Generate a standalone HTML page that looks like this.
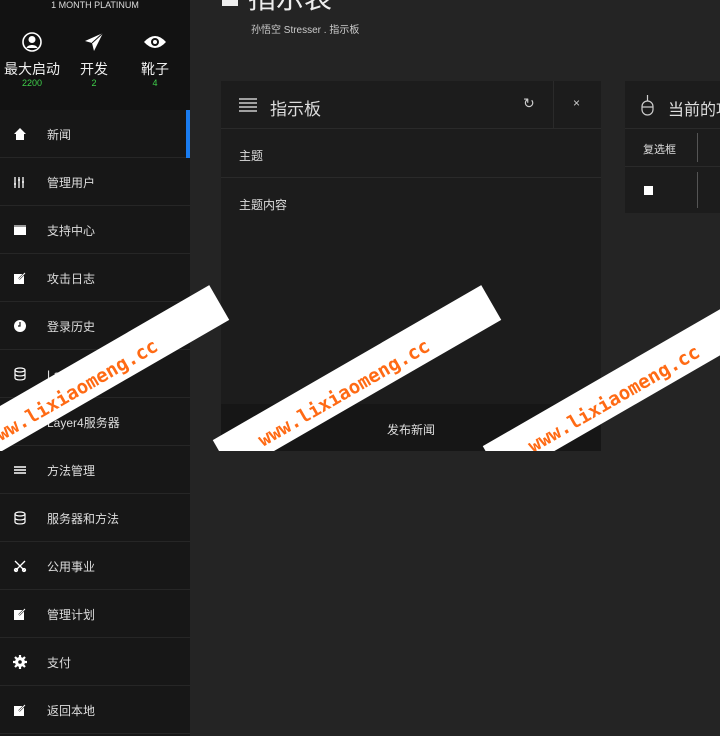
<!DOCTYPE html>
<html><head><meta charset="utf-8"><style>
*{margin:0;padding:0;box-sizing:border-box}
body{width:720px;height:736px;overflow:hidden;background:#242424;font-family:"Liberation Sans","Noto Sans CJK SC",sans-serif;color:#ddd;position:relative}
.side{position:absolute;left:0;top:0;width:190px;height:736px;background:#171717}
.top{height:110px;background:#121212;position:relative}
.plan{position:absolute;top:0;left:0;width:190px;text-align:center;font-size:9px;color:#ddd;line-height:11px}
.stat{position:absolute;top:32px;width:70px;text-align:center}
.stat .l{font-size:14px;color:#eee;margin-top:4px;line-height:17px}
.stat .n{font-size:9px;color:#3ecf4a;line-height:11px}
.item{height:48px;border-bottom:1px solid #262626;position:relative;font-size:12px;color:#ddd}
.item span{position:absolute;left:47px;top:16px}
.item .ic{position:absolute;left:13px;top:17px;width:14px;height:14px}
.act::after{content:"";position:absolute;right:0;top:0;width:4px;height:48px;background:#1a7cf0}
.panel{position:absolute;left:221px;top:81px;width:380px;height:370px;background:#1c1c1c}
.ph{height:48px;border-bottom:1px solid #2a2a2a;position:relative}
.row{height:49px;border-bottom:1px solid #2a2a2a;font-size:12px;padding:18px 0 0 18px}
.foot{position:absolute;left:0;bottom:0;width:380px;height:47px;background:#161616;text-align:center;font-size:12px;padding-top:17px}
.clip{position:absolute;left:0;top:0;width:720px;height:451px;overflow:hidden}
.band{position:absolute;width:310px;height:40px;background:#fff;transform:rotate(-30deg);transform-origin:center}
.band span{position:absolute;left:40px;top:14px;font:bold 19px "DejaVu Sans Mono","Liberation Mono",monospace;color:#ff6a14;letter-spacing:0;white-space:nowrap}
</style></head><body>
<div class="side">
<div class="top">
<div class="plan">1 MONTH PLATINUM</div>
<div class="stat" style="left:-3px"><svg width="20" height="20" viewBox="0 0 20 20"><circle cx="10" cy="10" r="9" fill="none" stroke="#fff" stroke-width="1.6"/><circle cx="10" cy="7.5" r="3.5" fill="#fff"/><path d="M4.5 16c1-4 10-4 11 0z" fill="#fff"/></svg><div class="l">最大启动</div><div class="n">2200</div></div>
<div class="stat" style="left:59px"><svg width="20" height="20" viewBox="0 0 20 20"><path d="M19 1L1 9l7 2 2 8z" fill="#fff"/><path d="M8 11L19 1" stroke="#121212" stroke-width="1"/></svg><div class="l">开发</div><div class="n">2</div></div>
<div class="stat" style="left:120px"><svg width="24" height="20" viewBox="0 0 24 20"><path d="M1 10Q12-2 23 10Q12 22 1 10z" fill="#fff"/><circle cx="12" cy="10" r="4" fill="#121212"/><circle cx="12" cy="10" r="2" fill="#fff"/></svg><div class="l">靴子</div><div class="n">4</div></div>
</div>
<div class="item act"><svg class="ic" viewBox="0 0 14 14"><path d="M7 1L1 7h2v6h8V7h2z" fill="#fff"/></svg><span>新闻</span></div>
<div class="item"><svg class="ic" viewBox="0 0 14 14" stroke="#fff" stroke-width="1.3"><path d="M2 2v11M6 2v11M10 2v11"/><path d="M1 9h2M5 5h2M9 7h2"/></svg><span>管理用户</span></div>
<div class="item"><svg class="ic" viewBox="0 0 14 14"><rect x="1" y="2" width="12" height="10" fill="#fff"/><rect x="1" y="2" width="12" height="2" fill="#999"/></svg><span>支持中心</span></div>
<div class="item"><svg class="ic" viewBox="0 0 14 14"><rect x="1" y="3" width="10" height="10" fill="#fff"/><path d="M6 8l6-6" stroke="#171717" stroke-width="2"/><path d="M6 8l6-6" stroke="#fff" stroke-width="1"/></svg><span>攻击日志</span></div>
<div class="item"><svg class="ic" viewBox="0 0 14 14"><circle cx="7" cy="7" r="6" fill="#fff"/><path d="M7 3v4H5" stroke="#171717" stroke-width="1.2" fill="none"/></svg><span>登录历史</span></div>
<div class="item"><svg class="ic" viewBox="0 0 14 14" fill="none" stroke="#fff" stroke-width="1.2"><ellipse cx="7" cy="3" rx="5" ry="2"/><path d="M2 3v8c0 2.6 10 2.6 10 0V3M2 7c0 2.6 10 2.6 10 0"/></svg><span>Layer7服务器</span></div>
<div class="item"><svg class="ic" viewBox="0 0 14 14" fill="none" stroke="#fff" stroke-width="1.2"><ellipse cx="7" cy="3" rx="5" ry="2"/><path d="M2 3v8c0 2.6 10 2.6 10 0V3M2 7c0 2.6 10 2.6 10 0"/></svg><span>Layer4服务器</span></div>
<div class="item"><svg class="ic" viewBox="0 0 14 14" stroke="#fff" stroke-width="1.5"><path d="M1 4h12M1 7h12M1 10h12"/></svg><span>方法管理</span></div>
<div class="item"><svg class="ic" viewBox="0 0 14 14" fill="none" stroke="#fff" stroke-width="1.2"><ellipse cx="7" cy="3" rx="5" ry="2"/><path d="M2 3v8c0 2.6 10 2.6 10 0V3M2 7c0 2.6 10 2.6 10 0"/></svg><span>服务器和方法</span></div>
<div class="item"><svg class="ic" viewBox="0 0 14 14" stroke="#fff" stroke-width="1.3" fill="none"><path d="M2 2l10 10M12 2L2 12"/><circle cx="3" cy="11" r="1.5"/><circle cx="11" cy="11" r="1.5"/></svg><span>公用事业</span></div>
<div class="item"><svg class="ic" viewBox="0 0 14 14"><rect x="1" y="3" width="10" height="10" fill="#fff"/><path d="M6 8l6-6" stroke="#171717" stroke-width="2"/><path d="M6 8l6-6" stroke="#fff" stroke-width="1"/></svg><span>管理计划</span></div>
<div class="item"><svg class="ic" viewBox="0 0 14 14"><circle cx="7" cy="7" r="5" fill="#fff"/><path d="M7 0v14M0 7h14M2 2l10 10M12 2L2 12" stroke="#fff" stroke-width="2.2"/><circle cx="7" cy="7" r="1.8" fill="#171717"/></svg><span>支付</span></div>
<div class="item"><svg class="ic" viewBox="0 0 14 14"><rect x="1" y="3" width="10" height="10" fill="#fff"/><path d="M6 8l6-6" stroke="#171717" stroke-width="2"/><path d="M6 8l6-6" stroke="#fff" stroke-width="1"/></svg><span>返回本地</span></div>
</div>
<div style="position:absolute;left:222px;top:-6px;width:16px;height:12px;background:#eee"></div>
<div style="position:absolute;left:248px;top:-16px;font-size:28px;color:#eee;line-height:30px">指示表</div>
<div style="position:absolute;left:251px;top:21px;font-size:10px;color:#ccc">孙悟空 Stresser . 指示板</div>
<div class="panel">
<div class="ph"><svg style="position:absolute;left:18px;top:17px" width="18" height="14" viewBox="0 0 18 14" stroke="#ccc" stroke-width="1.4"><path d="M0 1h18M0 5h18M0 9h18M0 13h18"/></svg><span style="position:absolute;left:49px;top:14px;font-size:17px;color:#ddd">指示板</span><div style="position:absolute;left:332px;top:0;width:1px;height:48px;background:#2a2a2a"></div><span style="position:absolute;left:302px;top:14px;font-size:14px;color:#ccc">↻</span><span style="position:absolute;left:352px;top:15px;font-size:12px;color:#ccc">×</span></div>
<div class="row">主题</div>
<div style="font-size:12px;padding:18px 0 0 18px">主题内容</div>
<div class="foot">发布新闻</div>
</div>
<div style="position:absolute;left:625px;top:81px;width:95px;height:132px;background:#1c1c1c;overflow:hidden">
<div style="height:48px;border-bottom:1px solid #2a2a2a;position:relative"><svg style="position:absolute;left:16px;top:13px" width="14" height="22" viewBox="0 0 14 22" fill="none" stroke="#ccc" stroke-width="1.2"><rect x="1" y="7" width="11" height="14" rx="5.5"/><path d="M1 13h11M6.5 7V1"/></svg><span style="position:absolute;left:43px;top:15px;font-size:16px;white-space:nowrap">当前的攻击</span></div>
<div style="height:38px;border-bottom:1px solid #2a2a2a;position:relative;font-size:11px"><span style="position:absolute;left:18px;top:12px">复选框</span><div style="position:absolute;left:72px;top:4px;width:1px;height:29px;background:#555"></div></div>
<div style="position:relative;height:45px"><div style="position:absolute;left:19px;top:19px;width:9px;height:9px;background:#fff"></div><div style="position:absolute;left:72px;top:5px;width:1px;height:36px;background:#555"></div></div>
</div>
<div class="clip">
<div class="band" style="left:-70px;top:360px"><span>www.lixiaomeng.cc</span></div>
<div class="band" style="left:202px;top:360px"><span>www.lixiaomeng.cc</span></div>
<div class="band" style="left:472px;top:366px"><span>www.lixiaomeng.cc</span></div>
</div>
</body></html>
